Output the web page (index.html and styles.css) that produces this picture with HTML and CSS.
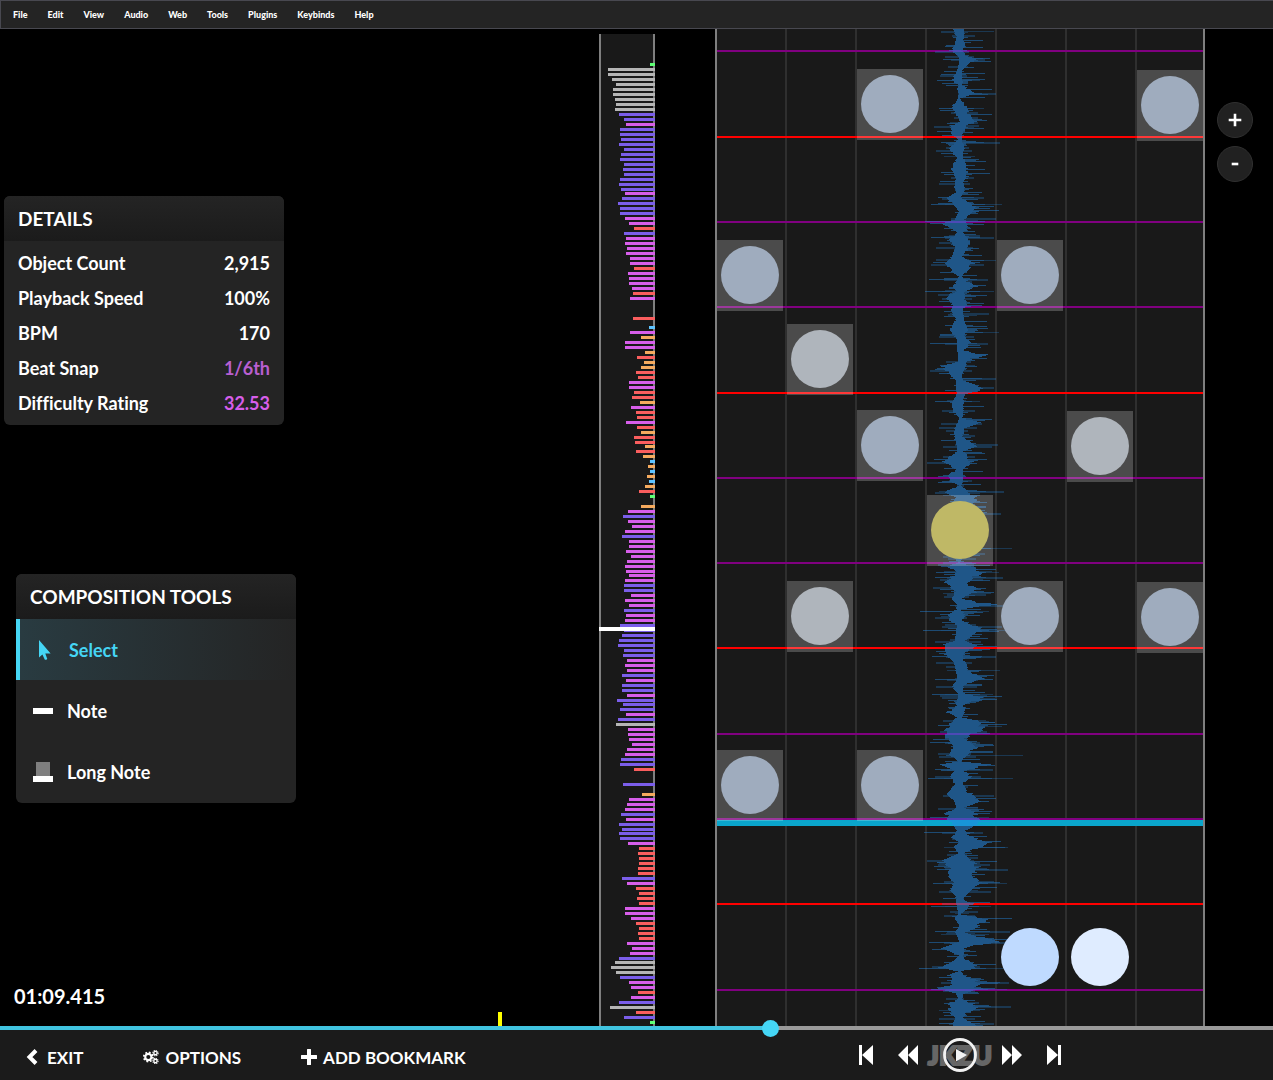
FILE: index.html
```html
<!DOCTYPE html>
<html lang="en">
<head>
<meta charset="utf-8">
<title>Editor</title>
<link rel="stylesheet" href="styles.css">
</head>
<body>
<nav class="menu" aria-label="Main menu">
  <button>File</button><button>Edit</button><button>View</button><button>Audio</button><button>Web</button><button>Tools</button><button>Plugins</button><button>Keybinds</button><button>Help</button>
</nav>

<main class="workspace">
  <div class="side">
    <section class="panel details">
      <h2>DETAILS</h2>
      <dl>
        <div><dt>Object Count</dt><dd>2,915</dd></div>
        <div><dt>Playback Speed</dt><dd>100%</dd></div>
        <div><dt>BPM</dt><dd>170</dd></div>
        <div><dt>Beat Snap</dt><dd class="snap">1/6th</dd></div>
        <div><dt>Difficulty Rating</dt><dd class="rating">32.53</dd></div>
      </dl>
    </section>
    <section class="panel tools">
      <h2>COMPOSITION TOOLS</h2>
      <button class="tool selected">
        <svg width="20" height="20" viewBox="0 0 20 20"><path fill="currentColor" d="M5 0V17.600L8.400 14.500L10.700 19.600Q11.600 20.300 13.300 19L11.300 13.400H16.600Z"/></svg>Select</button>
      <button class="tool">
        <svg width="20" height="20" viewBox="0 0 20 20"><path fill="#fff" d="M0 7h20v6H0z"/></svg>Note</button>
      <button class="tool">
        <svg width="20" height="20" viewBox="0 0 20 20"><path fill="#7f7f7f" d="M3 0h14v15H3z"/><path fill="#fff" d="M0 14h20v6H0z"/></svg>Long Note</button>
    </section>
    <p class="time">01:09.415</p>
  </div>

  <div class="density">
    <svg id="density" width="100%" height="100%" aria-hidden="true"></svg>
  </div>

  <div class="playfield">
    <svg id="field" width="100%" height="100%" aria-hidden="true"></svg>
  </div>

  <div class="zoom">
    <button aria-label="Zoom in"><svg width="14" height="14" viewBox="0 0 14 14"><path fill="#fff" d="M5.700 .7h2.600v5h5v2.600h-5v5H5.700v-5h-5V5.700h5z"/></svg></button>
    <button aria-label="Zoom out"><svg width="14" height="14" viewBox="0 0 14 14"><path fill="#fff" d="M3.700 5.700h6.600v2.600H3.700z"/></svg></button>
  </div>
</main>

<div class="seek">
  <input type="range" min="0" max="1000" value="607" aria-label="Song position">
  <span class="bookmark"></span>
</div>

<footer class="bar">
  <div class="actions">
    <button><svg width="16" height="16" viewBox="0 0 16 16"><path fill="none" stroke="#fff" stroke-width="4" d="M11 1.500L4.500 8L11 14.500"/></svg>EXIT</button>
    <button><svg width="16" height="16" viewBox="0 0 18 16"><g fill="none" stroke="#fff"><circle cx="6" cy="8" r="3.500" stroke-width="2.400"/><circle cx="6" cy="8" r="5.100" stroke-width="2" stroke-dasharray="2 2"/><circle cx="14" cy="3.600" r="1.900" stroke-width="1.500"/><circle cx="14" cy="3.600" r="3" stroke-width="1.200" stroke-dasharray="1.350 1"/><circle cx="14" cy="12.400" r="1.900" stroke-width="1.500"/><circle cx="14" cy="12.400" r="3" stroke-width="1.200" stroke-dasharray="1.350 1"/></g></svg>OPTIONS</button>
    <button><svg width="16" height="16" viewBox="0 0 16 16"><path fill="#fff" d="M6.500 0h3q.5 0 .5.500V6h5.500q.5 0 .5.500v3q0 .5-.5.500H10v5.500q0 .5-.5.500h-3q-.5 0-.5-.5V10H.5Q0 10 0 9.500v-3Q0 6 .5 6H6V.500Q6 0 6.500 0z"/></svg>ADD BOOKMARK</button>
  </div>
  <div class="player">
    <button aria-label="Previous"><svg width="14" height="20" viewBox="0 0 14 20"><path fill="#fff" d="M0 0h3v20H0zM14 0v20L3 10z"/></svg></button>
    <button aria-label="Rewind"><svg width="20" height="20" viewBox="0 0 20 20"><path fill="#fff" d="M10 0v20L0 10zM20 0v20L10 10z"/></svg></button>
    <div class="play">
      <span class="brand">JKZU</span>
      <button aria-label="Play"><svg width="34" height="34" viewBox="0 0 34 34"><circle cx="17" cy="17" r="15.500" fill="none" stroke="#f2f2f2" stroke-width="2.800"/><path fill="#f2f2f2" d="M13 11l11 6l-11 6.500z"/></svg></button>
    </div>
    <button aria-label="Fast forward"><svg width="20" height="20" viewBox="0 0 20 20"><path fill="#fff" d="M0 0l10 10L0 20zM10 0l10 10l-10 10z"/></svg></button>
    <button aria-label="Next"><svg width="14" height="20" viewBox="0 0 14 20"><path fill="#fff" d="M0 0l11 10L0 20zM11 0h3v20h-3z"/></svg></button>
  </div>
</footer>
<script src="editor.js"></script>
</body>
</html>
```
FILE: styles.css
```css
* { box-sizing: border-box; }

body {
  margin: 0;
  min-height: 100vh;
  display: flex;
  flex-direction: column;
  background: #000;
  color: #fff;
  font-family: Lato, "Liberation Sans", sans-serif;
  font-weight: 700;
  font-variant-ligatures: none;
}

button {
  display: flex;
  align-items: center;
  padding: 0;
  border: 0;
  background: none;
  color: inherit;
  font: inherit;
  cursor: pointer;
}

svg { display: block; flex: none; }

.menu {
  display: flex;
  height: 29px;
  padding-left: 2px;
  background: #242424;
  border: solid #484850;
  border-width: 1px 0 1px 1px;
  font-size: 9px;
  font-weight: 900;
}
.menu button { padding: 0 10px; }

.workspace {
  flex: 1;
  display: grid;
  grid-template-columns: 1fr 56px 550px 68px;
}

.side { display: flex; flex-direction: column; align-items: flex-start; }

.panel {
  width: 280px;
  background: #242424;
  border-radius: 6px;
  overflow: hidden;
  font-size: 18px;
}
.panel h2 {
  margin: 0;
  padding: 0 14px;
  font-size: 19px;
  line-height: 45px;
  background: linear-gradient(#242424, #1b1b1b);
}
.details { margin: 167px 0 0 4px; }
.details dl { margin: 0; padding: 5px 14px 4px; }
.details dl div { display: flex; justify-content: space-between; line-height: 35px; }
.details dd { margin: 0; }
.snap { color: #b95fd0; }
.rating { color: #d75eea; }

.tools { margin: 149px 0 0 16px; padding-bottom: 1px; }
.tool { width: 100%; height: 61px; padding-left: 17px; gap: 14px; }
.tool.selected {
  padding-left: 14px;
  gap: 15px;
  border-left: 4px solid #45d6f5;
  color: #45d6f5;
  background: linear-gradient(90deg, #293b41, #242424);
}

.time { margin: auto 0 16px 14px; font-size: 20px; line-height: 28px; }

.density {
  margin-top: 5px;
  background: #191919;
  border-left: 2px solid #7f7f7f;
}
.density svg { overflow: visible; }

.playfield {
  margin-left: 60px;
  background: #191919;
  border: solid #7f7f7f;
  border-width: 0 2px;
}

.zoom { display: flex; flex-direction: column; gap: 8px; padding: 73px 0 0 12px; }
.zoom button {
  width: 36px;
  height: 36px;
  justify-content: center;
  border: 1px solid #303030;
  border-radius: 50%;
  background: #212121;
}

.seek { position: relative; height: 4px; }
.seek input {
  appearance: none;
  display: block;
  width: 100%;
  height: 4px;
  margin: 0;
  background: linear-gradient(90deg, #40c4e0 60.6%, #9a9a9a 60.6%);
}
.seek input::-webkit-slider-thumb {
  appearance: none;
  width: 17px;
  height: 17px;
  border-radius: 50%;
  background: #45d6f5;
}
.bookmark {
  position: absolute;
  left: 498px;
  bottom: 4px;
  width: 4px;
  height: 14px;
  background: #ff0;
}

.bar {
  display: grid;
  grid-template-columns: 1fr 626px;
  align-items: center;
  height: 50px;
  background: #1b1b1b;
  font-size: 17px;
}
.actions { display: flex; gap: 60px; padding: 4px 0 0 25px; }
.actions button { gap: 6px; }
.player { display: flex; justify-content: center; align-items: center; gap: 25px; }
.play { position: relative; width: 34px; }
.play button { position: relative; }
.brand {
  position: absolute;
  top: 0;
  left: 50%;
  transform: translateX(-50%);
  color: #666;
  font-size: 26px;
  line-height: 34px;
  font-weight: 900;
  -webkit-text-stroke: 2px #666;
}
```
FILE: editor.js
```js
const NS = 'http://www.w3.org/2000/svg';

function add(parent, name, attrs) {
  const el = document.createElementNS(NS, name);
  for (const key in attrs) el.setAttribute(key, attrs[key]);
  parent.appendChild(el);
  return el;
}

// Difficulty density: bar width + colour key, '_' is an empty slot, '-' a slot one pixel shorter.
const barColors = { g: '#5eff75', w: '#b5b5b5', b: '#7b5eea', m: '#d75eea', r: '#fa5e5e', o: '#f5aa5e', c: '#5ec3ff' };
const bars = `5g 47w 47w 43w 39w 42w 42w 40w 39w 40w 36b 31b 29m 35b 35b 34b 36b 31b 34b 35b 31b 32b 31b 35b 36b 34b -30m
33b 37b 35b 35b 30m 26m 21r 31b 29m 30m 28m 29m 25m 25m 21r 27m 26m 26m 23m 22r 25m _ _ _ 22r _ -6c 25m 14o 30m 30m 10o 18r 11o
14o 19r 17r 26m 26m 21r 23r 15o 24m 19r 18r 29m 18r 14o 21r 20r -10o 19r 12o 5c 7o 5c 8o 6c 10o 16r 5g _ 14o 27m 32b 27m 23m
30m 33b 26m 26m 29m 24m 28m 30m 29m -26m 30m 31b 31b 24m 30m 26m 31b 29m 30m 35b 31b 33b 36b 37b 31b 32b 28m 30m 28m 33b 29m
33b 33b 28m 38b -32b 35b 29m 37b 39w 27m 27m 26m 23m 28m 30m 34b 35b 21r _ _ 32b _ 13o 26m 28m 30m 34b 29m 36b 33b -36b 35b
27m 16r 17r 16r 16r 17r 17r 33b 28m 19r 16r 18r 16r 30m 30m 24m 19r 16r 17r 16r 28m 23m 25m 36b -40w 44w 39w 35b 26m 24m 17r
24m 36b 45w 19r 31b 5g`.split(/\s+/);

const density = document.getElementById('density');
add(density, 'rect', { x: 52, y: 0, width: 2, height: '100%', fill: '#7f7f7f' });
let y = 24;
for (const bar of bars) {
  y += bar[0] === '-' ? 4 : 5;
  const m = bar.match(/(\d+)(\w)/);
  if (m) add(density, 'rect', { x: 54 - m[1], y, width: m[1], height: 3, fill: barColors[m[2]] });
}
add(density, 'rect', { x: -2, y: 593, width: 56, height: 4, fill: '#fff' });

// Playfield: seven lanes, 70px apart.
const field = document.getElementById('field');
for (let lane = 1; lane < 7; lane++) {
  add(field, 'rect', { x: lane * 70 - 2, y: 0, width: 2, height: '100%', fill: '#2f2f2f' });
}
const beats = [[21, 0], [107, 1], [192, 0], [277, 0], [363, 1], [448, 0], [533, 0], [618, 1], [704, 0], [789, 0], [874, 1], [960, 0]];
for (const [top, major] of beats) {
  add(field, 'rect', { x: 0, y: top, width: '100%', height: 2, fill: major ? '#f00' : '#800080' });
}
add(field, 'rect', { x: 0, y: 791, width: '100%', height: 6, fill: '#0aa5cb' });

// Waveform keyframes: row, extent left of centre, extent right of centre.
const wave = `0 6 4,7 2 4,17 5 5,21 8 2,26 1 6,29 0 22,33 0 10,41 2 2,51 7 3,56 0 2,59 2 8,64 0 16,69 1 0,78 7 7,86 2 10,92 -1 18,
96 7 6,104 9 3,110 1 2,119 9 4,128 2 4,139 7 8,149 3 8,153 5 3,163 3 5,168 12 0,175 6 12,182 0 17,190 4 4,195 16 10,203 2 4,
210 8 10,219 4 8,227 6 2,233 12 15,241 8 8,247 0 2,257 6 15,262 2 4,268 14 5,274 6 6,281 8 4,289 3 4,301 8 10,306 4 4,313 2 11,
321 2 3,325 1 24,332 1 6,337 15 5,345 9 2,351 2 3,359 3 24,365 2 5,371 6 3,381 7 4,388 0 2,393 1 20,399 4 4,407 5 3,417 2 20,
422 2 3,432 15 12,440 3 4,446 9 4,452 8 3,456 0 1,463 13 10,468 3 17,480 9 9,500 4 5,520 9 9,533 1 0,537 10 13,543 2 20,
554 14 8,562 3 20,569 8 2,575 2 32,580 2 1,585 14 5,591 9 2,596 2 15,603 3 20,611 4 5,615 14 17,624 13 4,631 6 4,641 3 8,
649 2 20,657 7 4,664 1 4,668 1 25,676 3 4,683 11 5,688 2 2,693 8 30,701 12 20,709 12 6,717 6 20,726 9 7,732 1 1,735 18 30,
741 4 4,747 8 10,754 4 3,762 12 8,771 5 20,778 3 4,784 12 17,793 8 20,801 2 6,808 6 12,813 0 30,818 5 22,824 1 4,833 17 17,
839 9 16,847 8 15,853 5 22,861 9 12,869 2 3,874 3 12,885 1 1,889 4 30,896 0 20,903 3 6,912 0 35,919 14 5,926 0 3,931 5 8,
938 18 20,942 1 1,946 10 6,954 6 22,959 18 20,964 3 4,969 1 2,976 11 18,983 8 8,988 3 3,997 8 15`
  .split(',').map(k => k.trim().split(' ').map(Number));

// Long isolated peaks: row, extent left, extent right.
const peaks = `2 4 34,30 17 25,51 17 20,64 4 36,79 21 24,113 19 40,127 31 15,168 22 24,175 29 42,189 18 36,192 35 22,208 29 34,231 25 36,
250 31 28,262 35 34,284 20 29,303 3 39,314 30 28,336 29 15,349 10 36,372 25 20,415 10 38,430 26 10,462 14 44,466 34 17,484 8 41,
519 18 52,524 30 25,543 24 39,548 25 43,564 33 31,576 10 43,582 40 29,597 36 42,601 37 48,627 28 36,641 25 40,650 25 18,665 28 33,
668 35 24,697 8 42,713 30 20,726 10 63,740 25 33,749 32 53,766 34 34,788 30 29,803 36 23,818 32 48,840 10 48,854 27 47,862 42 31,
877 29 31,902 25 50,905 37 29,913 31 45,939 41 43,953 38 49,960 29 47,977 10 51,981 42 20,994 21 34,1002 21 42`
  .split(',').map(k => k.trim().split(' ').map(Number));

let seed = 41;
const random = () => (seed = (seed * 16807) % 2147483647) / 2147483647;
const center = 243;
let solid = '', soft = '', faint = '';
const row = (top, left, right, h) => {
  const w = Math.max(1, Math.round(left) + Math.round(right));
  return `M${center - Math.round(left)} ${top}h${w}v${h}h${-w}z`;
};
let jitterL = 1, jitterR = 1;
for (let i = 0; i < wave.length - 1; i++) {
  for (let top = wave[i][0]; top < wave[i + 1][0]; top++) {
    const t = (top - wave[i][0]) / (wave[i + 1][0] - wave[i][0]);
    const l = wave[i][1] * (1 - t) + wave[i + 1][1] * t;
    const r = wave[i][2] * (1 - t) + wave[i + 1][2] * t;
    if (random() < .5) jitterL = .8 + random() * .5;
    if (random() < .5) jitterR = .7 + random() * .5;
    solid += row(top, l * jitterL + 1, r * jitterR, 1);
    const roll = random();
    if (roll < .14) soft += row(top, l + random() * 16, r + random() * 6, 1);
    else if (roll < .32) soft += row(top, l * .7, r + 5 + random() * 18, 1);
    else if (roll < .42) faint += row(top, l + random() * 20, r + random() * 14, 2);
  }
}
peaks.forEach(([top, l, r], i) => {
  if (i % 3) soft += row(top, l, r * .6, 1);
  faint += row(top, l * .5, r, i % 2 + 1);
});
const waveform = add(field, 'g', { fill: '#2488e3', opacity: .55 });
add(waveform, 'path', { d: faint, opacity: .5 });
add(waveform, 'path', { d: soft, opacity: .8 });
add(waveform, 'path', { d: solid });

// Notes: lane, centre row, colour, whether it still has to be played.
const blue = '#9facbe', grey = '#afb5bc';
const notes = [[2, 75, blue, 1], [6, 76, blue, 1], [0, 246, blue, 1], [4, 246, blue, 1], [1, 330, grey, 1], [2, 416, blue, 1],
  [5, 417, grey, 1], [3, 501, '#bfb866', 1], [1, 587, grey, 1], [4, 587, blue, 1], [6, 588, blue, 1], [0, 756, blue, 1],
  [2, 756, blue, 1], [4, 928, '#bfdaff', 0], [5, 928, '#dfecff', 0]];
for (const [lane, cy, fill, box] of notes) {
  if (box) add(field, 'rect', { x: lane * 70, y: cy - 35, width: 66, height: 71, fill: '#fff', opacity: .22 });
  add(field, 'circle', { cx: lane * 70 + 33, cy, r: 29, fill });
}
```
